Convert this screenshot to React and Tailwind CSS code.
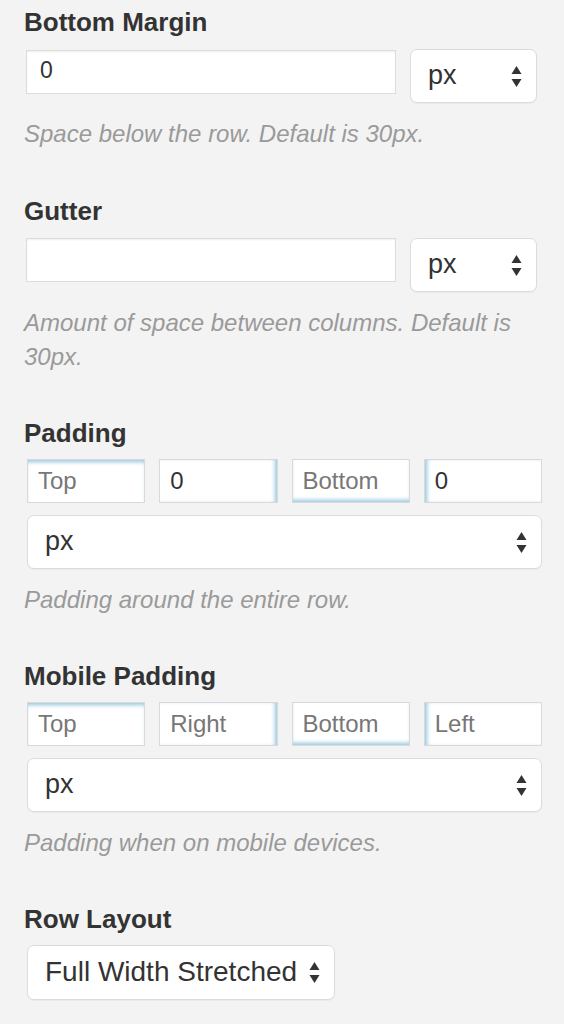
import React from "react";

const font = { fontFamily: '"Liberation Sans", Arial, sans-serif' };

const Arrows = () => (
  <svg width="11" height="23" viewBox="0 0 11 23" className="shrink-0">
    <path d="M5.5 1 L10.5 9 L0.5 9 Z" fill="#333" />
    <path d="M0.5 14 L10.5 14 L5.5 22 Z" fill="#333" />
  </svg>
);

const Select = ({ value, className = "" }) => (
  <div
    className={`flex items-center justify-between h-[54px] pl-[17px] pr-[14px] bg-white border border-[#dcdcdc] rounded-[7px] shadow-[0_1px_1px_rgba(0,0,0,0.04)] text-[27px] text-[#333] ${className}`}
  >
    <span className="-mt-[1px]">{value}</span>
    <Arrows />
  </div>
);

const TextInput = ({ value, className = "" }) => (
  <div
    className={`h-[44px] flex items-center pl-[13px] bg-white border border-[#dddddd] shadow-[inset_0_1px_2px_rgba(0,0,0,0.07)] text-[23px] text-[#333] ${className}`}
  >
    <span className="-mt-[3px]">{value}</span>
  </div>
);

const sideShadow = {
  top: "shadow-[inset_0_4px_4px_-2px_#94c6de]",
  right: "shadow-[inset_-4px_0_4px_-2px_#94c6de]",
  bottom: "shadow-[inset_0_-4px_4px_-2px_#94c6de]",
  left: "shadow-[inset_4px_0_4px_-2px_#94c6de]",
};

const DimInput = ({ side, value, placeholder }) => (
  <div
    className={`h-[44px] flex items-center pl-[10px] bg-white border border-[#d9d9d9] text-[24px] ${sideShadow[side]} ${value ? "text-[#333]" : "text-[#777]"}`}
  >
    <span className="-mt-[1px]">{value || placeholder}</span>
  </div>
);

const Label = ({ children, className = "" }) => (
  <div className={`h-[28px] leading-[28px] text-[26px] font-bold text-[#333] ${className}`}>
    {children}
  </div>
);

const Help = ({ children }) => (
  <p className="mt-[14px] text-[24px] leading-[34px] italic text-[#9a9a9a] pr-[30px]">
    {children}
  </p>
);

const Dimensions = ({ values }) => (
  <div className="grid grid-cols-4 gap-[14px] pr-[22px]">
    {["top", "right", "bottom", "left"].map((side, i) => (
      <DimInput
        key={side}
        side={side}
        value={values[i].value}
        placeholder={values[i].placeholder}
      />
    ))}
  </div>
);

export default function App() {
  return (
    <div className="min-h-[1024px] bg-[#f3f3f3] pl-[24px] pt-[8px]" style={font}>
      <Label>Bottom Margin</Label>
      <div className="mt-[14px] pl-[2px] flex items-start gap-[14px] pr-[27px]">
        <TextInput value="0" className="flex-1" />
        <Select value="px" className="w-[127px] -mt-[1px]" />
      </div>
      <Help>Space below the row. Default is 30px.</Help>

      <Label className="mt-[46px]">Gutter</Label>
      <div className="mt-[13px] pl-[2px] flex items-start gap-[14px] pr-[27px]">
        <TextInput value="" className="flex-1" />
        <Select value="px" className="w-[127px]" />
      </div>
      <Help>Amount of space between columns. Default is 30px.</Help>

      <Label className="mt-[45px]">Padding</Label>
      <div className="mt-[12px] pl-[3px]">
        <Dimensions
          values={[
            { placeholder: "Top" },
            { value: "0" },
            { placeholder: "Bottom" },
            { value: "0" },
          ]}
        />
        <Select value="px" className="mt-[12px] mr-[22px]" />
      </div>
      <Help>Padding around the entire row.</Help>

      <Label className="mt-[45px]">Mobile Padding</Label>
      <div className="mt-[12px] pl-[3px]">
        <Dimensions
          values={[
            { placeholder: "Top" },
            { placeholder: "Right" },
            { placeholder: "Bottom" },
            { placeholder: "Left" },
          ]}
        />
        <Select value="px" className="mt-[12px] mr-[22px]" />
      </div>
      <Help>Padding when on mobile devices.</Help>

      <Label className="mt-[45px]">Row Layout</Label>
      <div className="mt-[12px] pl-[3px]">
        <Select value="Full Width Stretched" className="w-[308px] gap-[6px] pl-[15px] pr-[10px] h-[55px] text-[28px]" />
      </div>
    </div>
  );
}
